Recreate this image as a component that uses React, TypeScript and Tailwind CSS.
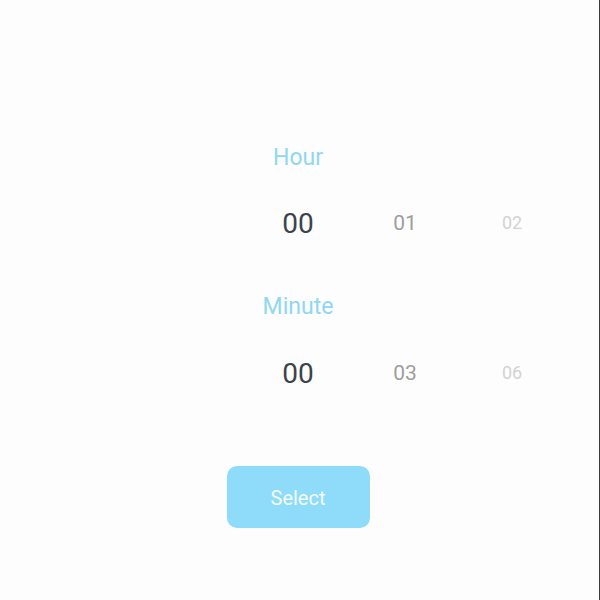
const hours = ['', '', '00', '01', '02'];
const minutes = ['', '', '00', '03', '06'];

const tone = [
  'text-transparent',
  'text-transparent',
  'text-[28px] text-[#3c434b]',
  'text-[21px] text-[#9e9e9e]',
  'text-[18px] text-[#d3d3d3] pb-[3px]',
];

function Wheel({ items }: { items: string[] }) {
  return (
    <div className="flex h-[60px] items-center">
      {items.map((item, i) => (
        <div key={i} className={`flex w-[107px] items-center justify-center ${tone[i]}`}>
          {item}
        </div>
      ))}
    </div>
  );
}

export default function App() {
  return (
    <div
      className="flex h-[600px] w-[600px] border-r border-[#3a3a3a] bg-[#fdfdfd]"
      style={{ fontFamily: 'Roboto, "Noto Sans", sans-serif' }}
    >
      <div className="flex w-[596px] flex-col items-center pt-[145px]">
        <p className="text-[23px] leading-[26px] text-[#8fd8f0]">Hour</p>
        <div className="mt-[23px]">
          <Wheel items={hours} />
        </div>
        <p className="mt-[40px] text-[23px] leading-[26px] text-[#8fd8f0]">Minute</p>
        <div className="mt-[24px]">
          <Wheel items={minutes} />
        </div>
        <button className="mt-[62px] h-[62px] w-[143px] rounded-[10px] bg-[#8edcfa] pt-[2px] text-[20px] text-[#f4fbfe]">
          Select
        </button>
      </div>
    </div>
  );
}
